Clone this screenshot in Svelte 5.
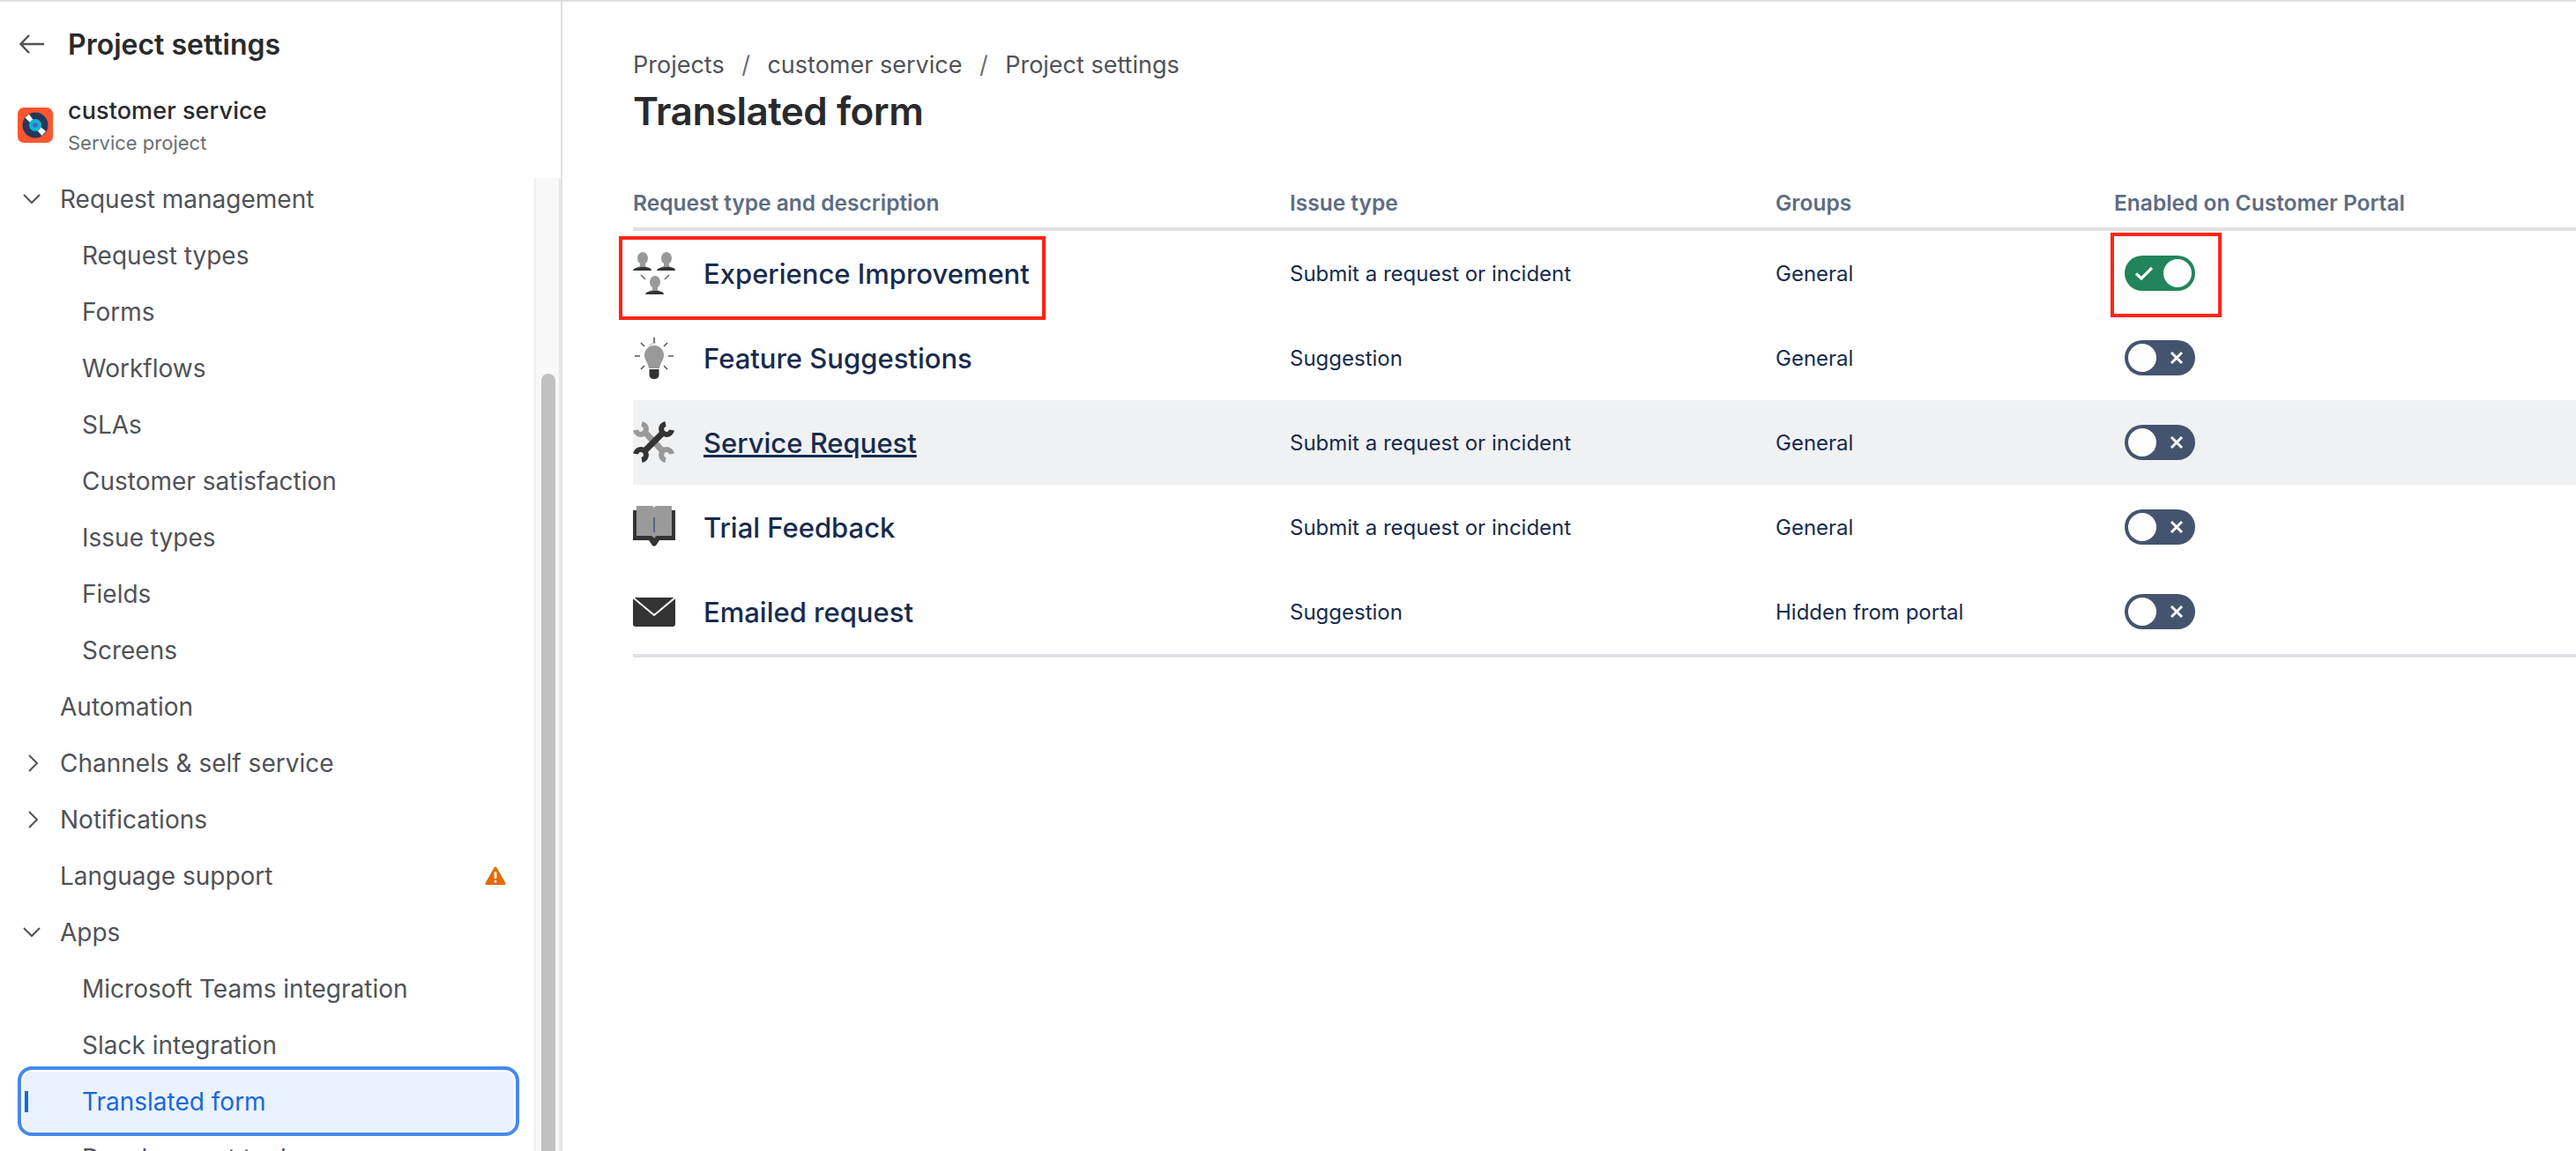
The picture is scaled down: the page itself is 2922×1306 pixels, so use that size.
<script>
	const nav = [
		{ label: 'Request management', arrow: 'down' },
		{ label: 'Request types', sub: true },
		{ label: 'Forms', sub: true },
		{ label: 'Workflows', sub: true },
		{ label: 'SLAs', sub: true },
		{ label: 'Customer satisfaction', sub: true },
		{ label: 'Issue types', sub: true },
		{ label: 'Fields', sub: true },
		{ label: 'Screens', sub: true },
		{ label: 'Automation' },
		{ label: 'Channels & self service', arrow: 'right' },
		{ label: 'Notifications', arrow: 'right' },
		{ label: 'Language support', warn: true },
		{ label: 'Apps', arrow: 'down' },
		{ label: 'Microsoft Teams integration', sub: true },
		{ label: 'Slack integration', sub: true },
		{ label: 'Translated form', sub: true, active: true },
		{ label: 'Development tools', sub: true }
	];

	const rows = [
		{ icon: 'people', name: 'Experience Improvement', issue: 'Submit a request or incident', group: 'General', on: true },
		{ icon: 'bulb', name: 'Feature Suggestions', issue: 'Suggestion', group: 'General' },
		{ icon: 'tools', name: 'Service Request', issue: 'Submit a request or incident', group: 'General', hover: true },
		{ icon: 'book', name: 'Trial Feedback', issue: 'Submit a request or incident', group: 'General' },
		{ icon: 'mail', name: 'Emailed request', issue: 'Suggestion', group: 'Hidden from portal' }
	];
</script>

<div class="page">
	<aside class="sidebar">
		<div class="back">
			<svg width="28" height="24" viewBox="0 0 28 24" fill="none" stroke="#505258" stroke-width="2.4">
				<path d="M1.500 12H28M11 2 1.500 12 11 22" />
			</svg>
			<span>Project settings</span>
		</div>
		<div class="project">
			<svg class="project-icon" width="40" height="40" viewBox="0 0 40 40">
				<rect width="40" height="40" rx="7" fill="#ff5630" />
				<circle cx="20" cy="20" r="14.500" fill="#253858" />
				<path d="M8.500 11.500 13 7.500 19 16l13 11-4.500 5L18 21z" fill="#fff" />
				<circle cx="20" cy="20" r="7" fill="#00b8d9" />
				<circle cx="20" cy="20" r="2.800" fill="#6554c0" />
			</svg>
			<div class="project-text">
				<div class="project-name">customer service</div>
				<div class="project-type">Service project</div>
			</div>
		</div>
		<div class="nav-wrap">
			<nav>
				{#each nav as item}
					<div class="item" class:sub={item.sub} class:active={item.active}>
						{#if item.arrow === 'down'}
							<svg class="chev" width="20" height="12" viewBox="0 0 20 12" fill="none" stroke="#505258" stroke-width="2">
								<path d="M1 1l9 9 9-9" />
							</svg>
						{:else if item.arrow === 'right'}
							<svg class="chev right" width="12" height="20" viewBox="0 0 12 20" fill="none" stroke="#505258" stroke-width="2">
								<path d="M1 1l9 9-9 9" />
							</svg>
						{/if}
						<span>{item.label}</span>
						{#if item.warn}
							<svg class="warn" width="24" height="22" viewBox="0 0 24 22">
								<path d="M12 2 2 19.500h20z" fill="#e06c00" stroke="#e06c00" stroke-width="3" stroke-linejoin="round" />
								<rect x="10.600" y="6" width="2.800" height="8" rx="1" fill="#fff" />
								<circle cx="12" cy="17" r="1.500" fill="#fff" />
							</svg>
						{/if}
					</div>
				{/each}
			</nav>
			<div class="scrollbar"><div class="thumb"></div></div>
		</div>
	</aside>

	<main>
		<div class="crumbs">
			<span>Projects</span><i>/</i><span>customer service</span><i>/</i><span>Project settings</span>
		</div>
		<h1>Translated form</h1>

		<div class="table">
			<div class="row head">
				<div>Request type and description</div>
				<div>Issue type</div>
				<div>Groups</div>
				<div>Enabled on Customer Portal</div>
			</div>
			{#each rows as row}
				<div class="row body" class:hover={row.hover}>
					<div class="name">
						<svg width="48" height="48" viewBox="0 0 48 48">
							{#if row.icon === 'people'}
								<g fill="#999">
									<ellipse cx="11" cy="7" rx="6" ry="7" />
									<ellipse cx="38" cy="7" rx="6" ry="7" />
									<ellipse cx="25" cy="34" rx="6" ry="7" />
									<path d="M8 12h6v4l7 3H1l7-3zM35 12h6v4l7 3H28l7-3zM22 39h6v4l6 3H15l7-3z" />
								</g>
								<path d="M0 21c1-3 6-4 11-4s10 1 10 4zM27 21c1-3 6-4 11-4s10 1 10 4zM14 48c1-3 6-4 11-4s10 1 10 4z" fill="#333" />
								<path d="M9 26l5 5M41 26l-5 5" stroke="#666" stroke-width="1.500" />
							{:else if row.icon === 'bulb'}
								<path d="M24 21m-11 0a11 11 0 1 1 22 0c0 6-4 8-5 15H18c-1-7-5-9-5-15z" fill="#999" />
								<path d="M19 10c2-2 4-3 7-3" stroke="#ccc" stroke-width="1.500" fill="none" />
								<path d="M18.500 37h11v6c0 3-2 5-5.500 5s-5.500-2-5.500-5z" fill="#333" />
								<path d="M24 1v6M9 7l4 4M39 7l-4 4M2 22h6M40 22h6M9 37l4-4M39 37l-4-4" stroke="#555" stroke-width="1.600" />
							{:else if row.icon === 'tools'}
								<g fill="none" stroke="#999">
									<path d="M14 13 34 34" stroke-width="7" />
									<path d="M10 3A6 6 0 1 1 3 10M37 44A6 6 0 1 1 44 37" stroke-width="6" />
								</g>
								<g fill="none" stroke="#333">
									<path d="M33 14 14 33" stroke-width="7" />
									<path d="M44 10A6 6 0 1 1 37 3M3 37A6 6 0 1 1 10 44" stroke-width="6" />
								</g>
							{:else if row.icon === 'book'}
								<path d="M0 5h48v34H30l-4 6c-1 1-3 1-4 0l-4-6H0z" fill="#333" />
								<path d="M4 0h17c2 0 3 1 3 3 0-2 1-3 3-3h17v34H28c-2 0-3 1-4 3-1-2-2-3-4-3H4z" fill="#9a9a9a" />
								<path d="M24 13v17" stroke="#44546f" stroke-width="1.500" />
							{:else}
								<rect y="8" width="48" height="33" rx="3" fill="#333" />
								<path d="M0 8l24 20L48 8" fill="none" stroke="#fff" stroke-width="2" />
							{/if}
						</svg>
						<span class="title">{row.name}</span>
					</div>
					<div class="cell">{row.issue}</div>
					<div class="cell">{row.group}</div>
					<div class="cell">
						<div class="toggle" class:on={row.on}>
							{#if row.on}
								<svg width="20" height="16" viewBox="0 0 20 16" fill="none" stroke="#fff" stroke-width="3.200">
									<path d="M1 8.500l6 5.500L19 2" />
								</svg>
							{:else}
								<svg width="16" height="16" viewBox="0 0 16 16" fill="none" stroke="#fff" stroke-width="3">
									<path d="M2 2l12 12M14 2 2 14" />
								</svg>
							{/if}
							<b></b>
						</div>
					</div>
				</div>
			{/each}
			<div class="mark mark-name"></div>
			<div class="mark mark-toggle"></div>
		</div>
	</main>
</div>

<style>
	:global(body) {
		margin: 0;
		background: #fff;
	}
	.page {
		display: flex;
		height: 1304px;
		width: 2922px;
		overflow: hidden;
		border-top: 2px solid #dfdfdf;
		font-family: Inter, 'Noto Sans', sans-serif;
		color: #292a2e;
	}
	.sidebar {
		width: 636px;
		flex: none;
		display: flex;
		flex-direction: column;
		border-right: 2px solid #e2e2e2;
	}
	.back {
		display: flex;
		align-items: center;
		gap: 27px;
		padding: 32px 0 0 22px;
		height: 32px;
		font-size: 32px;
		font-weight: 600;
	}
	.project {
		display: flex;
		align-items: center;
		gap: 17px;
		padding: 42px 0 0 20px;
	}
	.project-icon {
		margin-top: -4px;
	}
	.project-name {
		font-size: 27px;
		font-weight: 500;
		line-height: 36px;
		letter-spacing: 0.1px;
	}
	.project-type {
		font-size: 22px;
		color: #6b6e76;
		line-height: 36px;
	}
	.nav-wrap {
		flex: 1;
		min-height: 0;
		display: flex;
		margin-top: 22px;
	}
	nav {
		flex: 1;
		margin-top: -8px;
	}
	.item {
		display: flex;
		align-items: center;
		height: 64px;
		margin-left: 20px;
		margin-right: 17px;
		padding-left: 48px;
		position: relative;
		font-size: 28px;
		color: #505258;
		white-space: nowrap;
		box-sizing: border-box;
	}
	.item.sub {
		padding-left: 73px;
	}
	.chev {
		position: absolute;
		left: 6px;
		top: 26px;
	}
	.chev.right {
		left: 12px;
		top: 22px;
	}
	.warn {
		margin-left: auto;
		margin-right: 15px;
	}
	.item.active {
		color: #1868db;
		background: #e9f2fe;
		height: 79px;
		margin: -8px 17px -7px 20px;
		border: 4px solid #4688ec;
		border-radius: 16px;
		box-shadow: inset 0 0 0 2px #fff;
		padding-left: 69px;
	}
	.item.active::before {
		content: '';
		position: absolute;
		left: 4px;
		top: 24px;
		width: 4px;
		height: 24px;
		background: #1868db;
	}
	.scrollbar {
		width: 16px;
		flex: none;
		background: #f8f8f8;
		border-left: 2px solid #eee;
		border-right: 2px solid #e8e8e8;
		padding: 222px 4px 0 6px;
		box-sizing: content-box;
	}
	.thumb {
		height: 1000px;
		background: #c1c1c1;
		border-radius: 8px;
	}
	main {
		flex: 1;
		min-width: 0;
		padding: 54px 0 0 80px;
	}
	.crumbs {
		display: flex;
		gap: 19.500px;
		font-size: 27px;
		line-height: 36px;
		color: #505258;
	}
	.crumbs i {
		font-style: normal;
		color: #6b6e76;
	}
	h1 {
		margin: 6px 0 0;
		font-size: 44px;
		line-height: 56px;
		font-weight: 600;
		letter-spacing: -0.5px;
	}
	.table {
		position: relative;
		margin-top: 46px;
		border-bottom: 4px solid #dfe1e6;
	}
	.row {
		display: grid;
		grid-template-columns: 745px 551px 384px 1fr;
		align-items: center;
	}
	.head {
		height: 56px;
		padding-top: 2px;
		border-bottom: 4px solid #dfe1e6;
		font-size: 24.500px;
		font-weight: 600;
		color: #5e6c84;
		box-sizing: content-box;
	}
	.body {
		height: 96px;
		font-size: 24px;
		color: #172b4d;
	}
	.body.hover {
		background: #f0f1f3;
	}
	.name {
		display: flex;
		align-items: center;
		gap: 32px;
	}
	.title {
		font-size: 31px;
		font-weight: 500;
	}
	.hover .title {
		text-decoration: underline;
	}
	.toggle {
		width: 80px;
		height: 40px;
		margin-left: 12px;
		border-radius: 20px;
		background: #44546f;
		display: flex;
		align-items: center;
		justify-content: flex-end;
		padding: 0 13px 0 0;
		position: relative;
		box-sizing: border-box;
	}
	.toggle b {
		position: absolute;
		left: 4px;
		top: 4px;
		width: 32px;
		height: 32px;
		border-radius: 50%;
		background: #fff;
	}
	.toggle.on {
		background: #22845a;
		justify-content: flex-start;
		padding: 0 0 0 12px;
	}
	.toggle.on b {
		left: 44px;
	}
	.mark {
		position: absolute;
		border: 4px solid #ff2415;
		box-sizing: border-box;
	}
	.mark-name {
		left: -16px;
		top: 68px;
		width: 484px;
		height: 95px;
	}
	.mark-toggle {
		left: 1676px;
		top: 64px;
		width: 126px;
		height: 96px;
	}
</style>
